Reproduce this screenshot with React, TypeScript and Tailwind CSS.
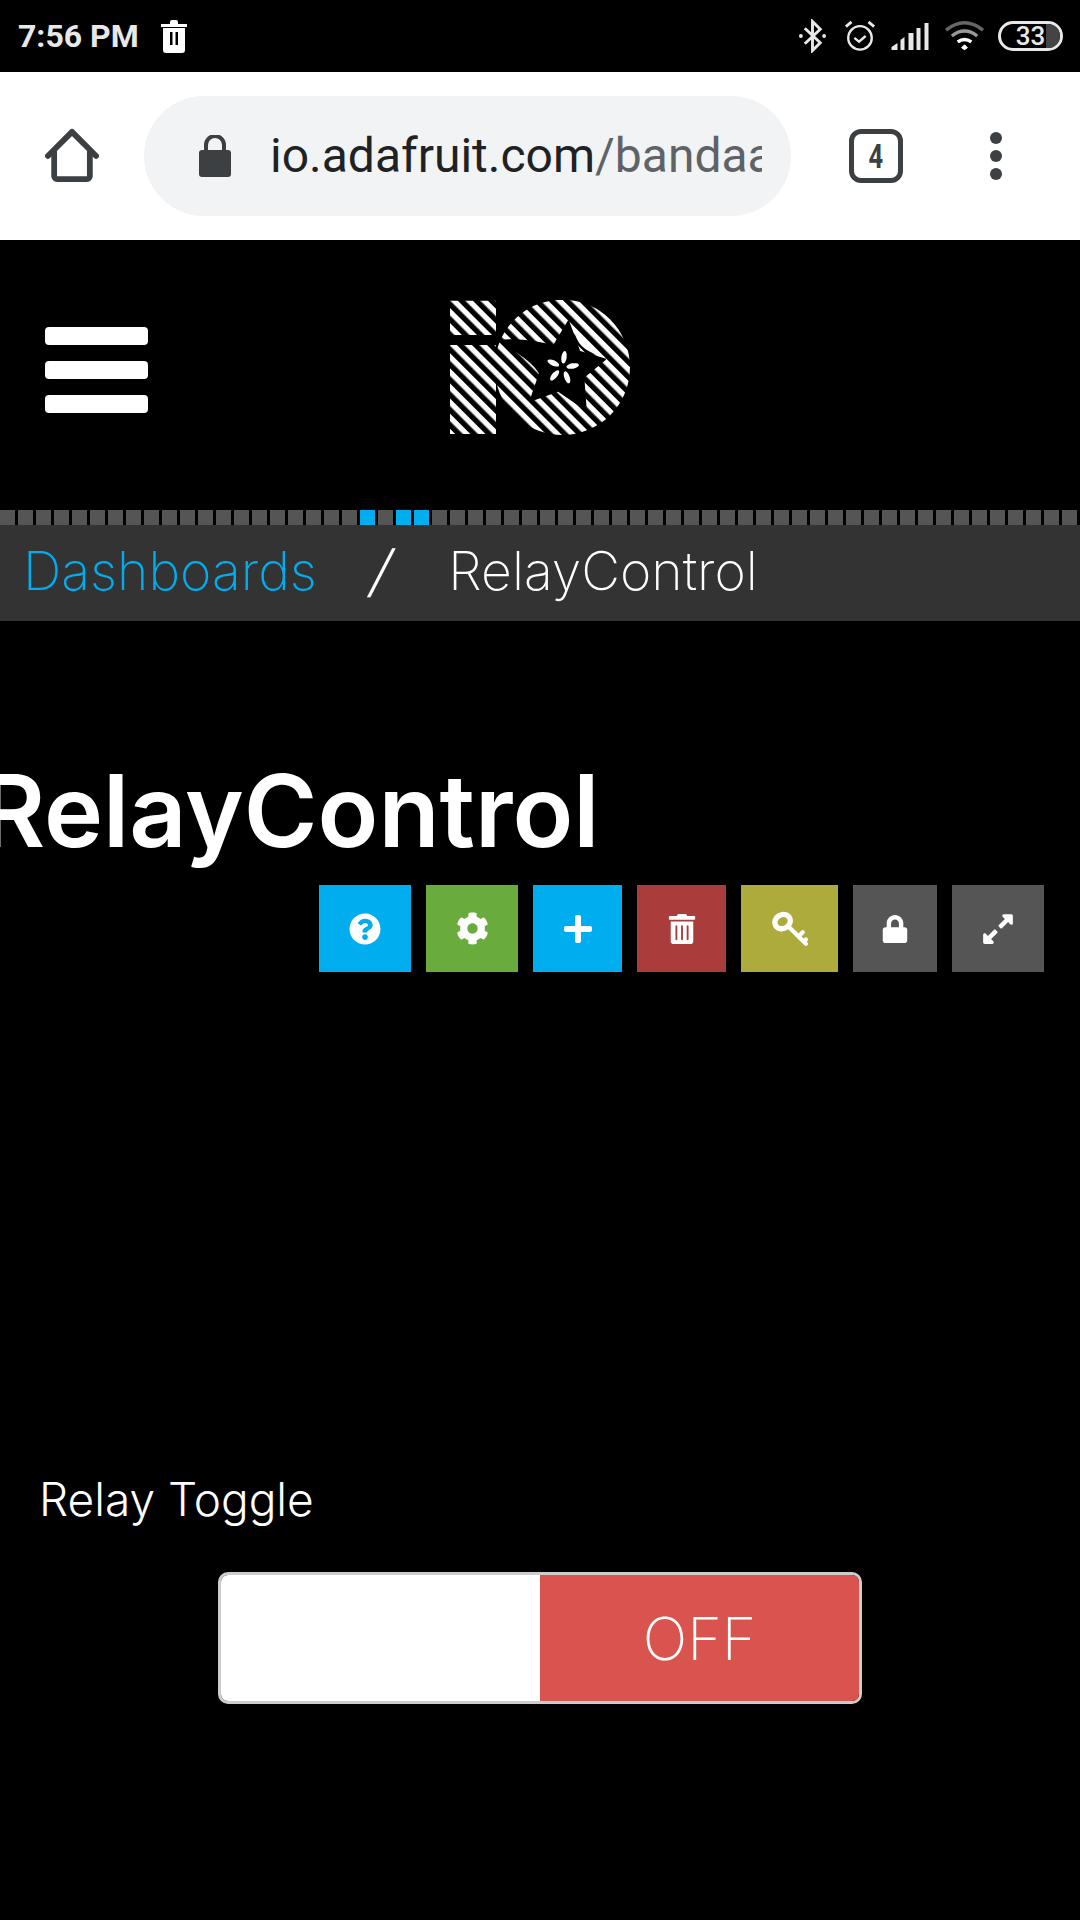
import React from 'react';
import { FaQuestionCircle, FaCog, FaPlus, FaTrashAlt, FaLock, FaExpandAlt } from 'react-icons/fa';

const LitSquares = [20, 22, 23];

const StatusBar = () => (
  <div className="h-[72px] bg-black flex items-center justify-between pl-[18px] pr-[17px]">
    <div className="flex items-center gap-[20px]">
      <span className="font-['Roboto'] font-bold text-[32px] leading-none text-[#e8e8e8]">7:56 PM</span>
      <svg width="30" height="34" viewBox="0 0 28 34" fill="#fff">
        <path d="M1 5h9V3q0-2 2-2h4q2 0 2 2v2h9v3H1zM3 9h22v22q0 3-3 3H6q-3 0-3-3zM10 13v13h2.500V13zM15.500 13v13H18V13z" fillRule="evenodd" />
      </svg>
    </div>
    <div className="flex items-center">
      <svg width="29" height="34" viewBox="0 0 30 34" fill="none" stroke="#e8e8e8" strokeWidth="3">
        <path d="M7 9l16 15-8 8V2l8 8L7 25" />
        <circle cx="3" cy="17" r="2" fill="#e8e8e8" stroke="none" />
        <circle cx="27" cy="17" r="2" fill="#e8e8e8" stroke="none" />
      </svg>
      <svg width="32" height="34" viewBox="0 0 34 34" fill="none" stroke="#e8e8e8" strokeWidth="2.500" className="ml-[17px]">
        <circle cx="17" cy="19" r="12.500" />
        <path d="M11 19l5 4 7-6" />
        <path d="M2 7l6-5M32 7l-6-5" strokeWidth="3" />
      </svg>
      <svg width="39" height="28" viewBox="0 0 38 28" fill="#e8e8e8" className="ml-[15px]">
        <path d="M0 28v-3l6-4v7zM9 28V18l4-3v13zM17 28V11h5v17zM25 28V6h4v22zM33 28V1h4v27z" />
      </svg>
      <svg width="41" height="34" viewBox="0 0 42 34" fill="none" stroke="#666" strokeWidth="3.500" className="ml-[15px]">
        <path d="M1 11q19-15 38 0" />
        <path d="M7 17q13-10 26 0" stroke="#999" />
        <path d="M13 23q7-5 14 0" stroke="#fff" />
        <path d="M17 29l3-3 3 3-3 2z" fill="#fff" stroke="#fff" strokeWidth="1" />
      </svg>
      <div className="relative ml-[12px] w-[65px] h-[30px] rounded-full border-[3px] border-[#e8e8e8] overflow-hidden flex items-center justify-center">
        <div className="absolute right-0 top-0 bottom-0 w-[14px] bg-[#444]" />
        <span className="relative font-['Roboto'] font-medium text-[26px] leading-none text-[#e8e8e8]">33</span>
      </div>
    </div>
  </div>
);

const ChromeBar = () => (
  <div className="h-[168px] bg-white flex items-center">
    <div className="w-[144px] flex justify-center">
      <svg width="54" height="56" viewBox="0 0 56 56" fill="none" stroke="#3c4043" strokeWidth="6" strokeLinejoin="round" strokeLinecap="round">
        <path d="M3 28L28 3l25 25" />
        <path d="M9.500 24v25a3 3 0 0 0 3 3h31a3 3 0 0 0 3-3V24" />
      </svg>
    </div>
    <div className="relative w-[647px] h-[120px] rounded-full bg-[#f1f3f4] flex items-center pl-[55px] overflow-hidden">
      <svg width="32" height="42" viewBox="0 0 32 42" fill="#3c4043" className="shrink-0">
        <path d="M7 17v-7a9 9 0 0 1 18 0v7" fill="none" stroke="#3c4043" strokeWidth="4" />
        <rect x="0" y="15" width="32" height="27" rx="3" />
      </svg>
      <div className="ml-[39px] w-[492px] overflow-hidden whitespace-nowrap font-['Roboto'] text-[48px] leading-[60px]">
        <span className="text-[#202124]">io.adafruit.com</span>
        <span className="text-[#5f6368]">/bandaa</span>
      </div>
    </div>
    <div className="ml-[58px] w-[54px] h-[54px] rounded-[12px] border-[5px] border-[#3c4043] flex items-center justify-center">
      <span className="font-['Roboto'] font-bold text-[34px] leading-none text-[#3c4043] scale-x-75">4</span>
    </div>
    <div className="ml-[87px] flex flex-col gap-[6px]">
      <div className="w-[12px] h-[12px] rounded-full bg-[#3c4043]" />
      <div className="w-[12px] h-[12px] rounded-full bg-[#3c4043]" />
      <div className="w-[12px] h-[12px] rounded-full bg-[#3c4043]" />
    </div>
  </div>
);

const Logo = () => (
  <svg width="230" height="170" viewBox="0 0 690 510">
    <defs>
      <pattern id="stripes" width="32" height="32" patternUnits="userSpaceOnUse" patternTransform="translate(6 0) rotate(45)">
        <rect width="32" height="16" fill="#fff" />
      </pattern>
      <clipPath id="ioShape">
        <rect x="90" y="62" width="138" height="103" />
        <rect x="90" y="195" width="138" height="267" />
        <circle cx="427" cy="262" r="203" />
      </clipPath>
    </defs>
    <g clipPath="url(#ioShape)">
      <rect width="690" height="510" fill="url(#stripes)" />
    </g>
    <path d="M445 125L478 215 555 238 490 292 497 388 415 332 332 362 360 280Q335 235 235 182Q330 175 400 200z" fill="#000" stroke="#000" strokeWidth="6" strokeLinejoin="round" />
    <path d="M465 155Q470 205 535 225Q505 195 465 155z" fill="#fff" />
    <g fill="#fff">
      <ellipse cx="432" cy="232" rx="8" ry="19" transform="rotate(8 432 232)" />
      <ellipse cx="458" cy="258" rx="8" ry="19" transform="rotate(80 458 258)" />
      <ellipse cx="441" cy="292" rx="8" ry="19" transform="rotate(-20 441 292)" />
      <ellipse cx="404" cy="286" rx="8" ry="19" transform="rotate(40 404 286)" />
      <ellipse cx="400" cy="249" rx="8" ry="19" transform="rotate(-65 400 249)" />
    </g>
  </svg>
);

const Header = () => (
  <div className="relative h-[270px] bg-black">
    <div className="flex items-center h-full pl-[45px] pb-[10px]">
      <div className="flex flex-col gap-[16px]">
        <div className="w-[103px] h-[18px] rounded-[4px] bg-white" />
        <div className="w-[103px] h-[18px] rounded-[4px] bg-white" />
        <div className="w-[103px] h-[18px] rounded-[4px] bg-white" />
      </div>
    </div>
    <div className="absolute left-[420px] top-[40px]">
      <Logo />
    </div>
  </div>
);

const Breadcrumb = () => (
  <div className="bg-[#333]">
    <div className="h-[15px] bg-black flex overflow-hidden">
      {Array.from({ length: 60 }).map((_, i) => (
        <div key={i} className={`w-[15px] h-[15px] mr-[3px] shrink-0 ${LitSquares.includes(i) ? 'bg-[#00aeef]' : 'bg-[#555]'}`} />
      ))}
    </div>
    <div className="h-[96px] flex items-center pl-[23px] pb-[4px] font-['Inter'] font-extralight text-[53.5px] leading-none">
      <span className="text-[#00aeef]">Dashboards</span>
      <span className="ml-[55px] text-white font-light text-[56px] -skew-x-[14deg]">/</span>
      <span className="ml-[57px] text-white">RelayControl</span>
    </div>
  </div>
);

const KeyIcon = () => (
  <svg width="36" height="36" viewBox="0 0 34 34" fill="none" stroke="#fff" strokeWidth="5">
    <ellipse cx="10" cy="10" rx="7.500" ry="6.500" transform="rotate(-30 10 10)" />
    <path d="M16 15l16 16M25 24l4-4M30 29l2-2" strokeLinecap="round" strokeWidth="4" />
  </svg>
);

const actions = [
  { w: 'w-[92px]', bg: 'bg-[#00aeef]', icon: <FaQuestionCircle size={32} /> },
  { w: 'w-[92px]', bg: 'bg-[#69ab3c]', icon: <FaCog size={33} /> },
  { w: 'w-[89px]', bg: 'bg-[#00aeef]', icon: <FaPlus size={32} /> },
  { w: 'w-[89px]', bg: 'bg-[#ab3c3c]', icon: <FaTrashAlt size={30} /> },
  { w: 'w-[97px]', bg: 'bg-[#adab3c]', icon: <KeyIcon /> },
  { w: 'w-[84px]', bg: 'bg-[#555555]', icon: <FaLock size={28} /> },
  { w: 'w-[92px]', bg: 'bg-[#555555]', icon: <FaExpandAlt size={34} /> },
];

export default function App() {
  return (
    <div className="w-[1080px] h-[1920px] bg-black overflow-hidden">
      <StatusBar />
      <ChromeBar />
      <Header />
      <Breadcrumb />

      <h1 className="mt-[140px] -ml-[20px] font-['Inter'] font-semibold text-[100px] leading-[100px] text-white whitespace-nowrap">
        RelayControl
      </h1>

      <div className="mt-[24px] pr-[36px] flex justify-end gap-[15px]">
        {actions.map((a, i) => (
          <div key={i} className={`${a.w} h-[87px] ${a.bg} flex items-center justify-center text-white`}>
            {a.icon}
          </div>
        ))}
      </div>

      <div className="mt-[505px] pl-[39px] font-['Inter'] font-light text-[46px] leading-[44px] text-white">
        Relay Toggle
      </div>

      <div className="mt-[51px] mx-auto w-[644px] h-[132px] rounded-[10px] border-[3px] border-[#ccc] flex overflow-hidden">
        <div className="flex-1 bg-white" />
        <div className="flex-1 bg-[#d9534f] flex items-center justify-center font-['Inter'] font-extralight text-[59px] leading-none text-white">
          OFF
        </div>
      </div>
    </div>
  );
}
